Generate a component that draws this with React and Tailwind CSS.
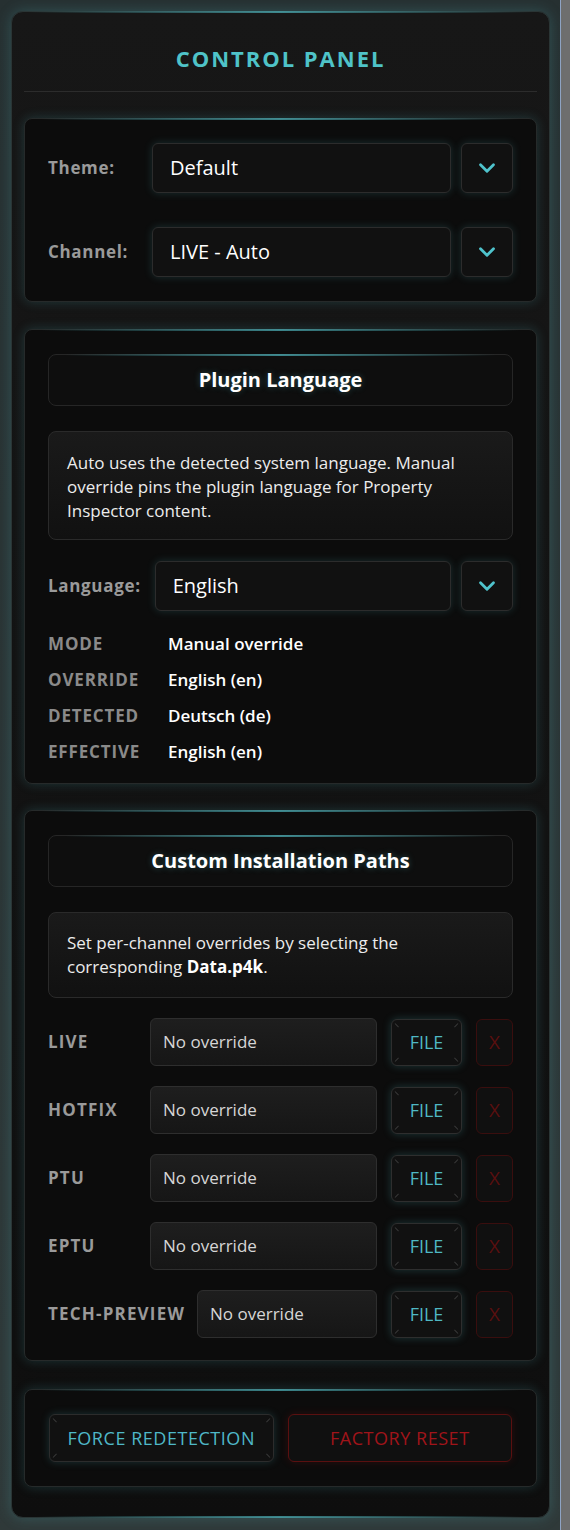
import { ChevronDown } from 'lucide-react'

const font = { fontFamily: '"Open Sans", "Noto Sans", sans-serif' }

const topGlow =
  "before:absolute before:left-4 before:right-4 before:top-[-1px] before:h-[2px] before:rounded-full before:bg-linear-to-r before:from-transparent before:via-[#4fb8c0]/70 before:to-transparent"

function Section({ children, className = '' }) {
  return (
    <div className={`relative rounded-lg border border-[#262a2a] bg-[#0c0c0c] shadow-[0_0_12px_rgba(79,184,192,0.22)] ${topGlow} ${className}`}>
      {children}
    </div>
  )
}

function SelectRow({ label, value }) {
  return (
    <div className="flex items-center">
      <span className="min-w-[90px] mr-[14px] text-[17px] font-bold tracking-[0.04em] text-[#9a9a9a]">{label}</span>
      <div className="flex-1 h-[50px] flex items-center px-[17px] rounded-md border border-[#2c2c2c] bg-[#111111] shadow-[0_0_8px_rgba(79,184,192,0.2)] text-[20px] text-white">
        {value}
      </div>
      <button className="ml-[10px] w-[52px] h-[50px] flex items-center justify-center rounded-md border border-[#2c2c2c] bg-[#111111] shadow-[0_0_8px_rgba(79,184,192,0.2)]">
        <ChevronDown size={26} strokeWidth={2.6} className="text-[#4fc3cc]" />
      </button>
    </div>
  )
}

function Heading({ children }) {
  return (
    <div className={`relative h-[52px] flex items-center justify-center rounded-lg border border-[#262626] bg-[#0e0e0e] text-[20px] font-bold text-white [text-shadow:0_0_6px_rgba(79,184,192,0.35)] ${topGlow}`}>
      {children}
    </div>
  )
}

function Note({ children, className = '' }) {
  return (
    <div className={`rounded-lg border border-[#2a2a2a] bg-linear-to-b from-[#1a1a1a] to-[#111111] px-[18px] text-[17px] leading-[24px] text-[#ececec] ${className}`}>
      {children}
    </div>
  )
}

function Corners() {
  return (
    <>
      <span className="absolute left-[3px] top-[3px] w-[5px] h-px bg-[#3a3a3a] rotate-45 origin-left" />
      <span className="absolute right-[3px] top-[3px] w-[5px] h-px bg-[#3a3a3a] -rotate-45 origin-right" />
      <span className="absolute left-[3px] bottom-[3px] w-[5px] h-px bg-[#3a3a3a] -rotate-45 origin-left" />
      <span className="absolute right-[3px] bottom-[3px] w-[5px] h-px bg-[#3a3a3a] rotate-45 origin-right" />
    </>
  )
}

function PathRow({ label }) {
  return (
    <div className="flex items-center h-[48px]">
      <span className="min-w-[90px] mr-[12px] text-[17px] font-bold tracking-[0.07em] text-[#9a9a9a]">{label}</span>
      <div className="flex-1 h-[48px] flex items-center px-[12px] rounded-md border border-[#2e2e2e] bg-linear-to-b from-[#1e1e1e] to-[#161616] text-[17px] text-[#d6d6d6]">
        No override
      </div>
      <button className="relative ml-[14px] w-[71px] h-[47px] flex items-center justify-center rounded-md border border-[#2e2e2e] bg-[#111111] shadow-[0_0_8px_rgba(79,184,192,0.25)] text-[18px] text-[#4fb8c4]">
        <Corners />
        FILE
      </button>
      <button className="ml-[14px] w-[37px] h-[47px] flex items-center justify-center rounded-md border border-[#3a0e0e] bg-[#101010] text-[19px] text-[#5a0f0f]">
        X
      </button>
    </div>
  )
}

const info = [
  ['MODE', 'Manual override'],
  ['OVERRIDE', 'English (en)'],
  ['DETECTED', 'Deutsch (de)'],
  ['EFFECTIVE', 'English (en)'],
]

export default function App() {
  return (
    <div style={font} className="flex w-[570px] h-[1530px] bg-linear-to-b from-[#263031] to-[#2f3939] overflow-hidden">
      <div className="flex-1 pl-[11px] pr-[10px] pt-[11px] pb-[12px]">
        <div className={`relative h-full rounded-xl border border-[#2a3535] bg-linear-to-b from-[#171717] to-[#0e0e0e] shadow-[0_0_14px_rgba(79,184,192,0.25)] px-[12px] ${topGlow} after:absolute after:left-6 after:right-6 after:bottom-[-1px] after:h-[2px] after:bg-linear-to-r after:from-transparent after:via-[#4fb8c0]/70 after:to-transparent`}>
          <h1 className="pt-[33px] pb-[20px] leading-[26px] text-center text-[22px] font-bold tracking-[0.09em] text-[#4fc3c8]">
            CONTROL PANEL
          </h1>
          <div className="h-px bg-[#2c2c2c]" />

          <Section className="mt-[26px] px-[23px] py-[24px] flex flex-col gap-[34px]">
            <SelectRow label="Theme:" value="Default" />
            <SelectRow label="Channel:" value="LIVE - Auto" />
          </Section>

          <Section className="mt-[27px] px-[23px] pt-[24px] pb-[13px]">
            <Heading>Plugin Language</Heading>
            <Note className="mt-[25px] pt-[19px] pb-[16px]">
              Auto uses the detected system language. Manual override pins the plugin language for Property Inspector content.
            </Note>
            <div className="mt-[21px]">
              <SelectRow label="Language:" value="English" />
            </div>
            <div className="mt-[15px] flex flex-col">
              {info.map(([k, v]) => (
                <div key={k} className="flex items-center h-[36px]">
                  <span className="w-[120px] text-[17px] font-bold tracking-[0.05em] text-[#8a8a8a]">{k}</span>
                  <span className="text-[17px] font-semibold text-white">{v}</span>
                </div>
              ))}
            </div>
          </Section>

          <Section className="mt-[26px] px-[23px] pt-[24px] pb-[22px]">
            <Heading>Custom Installation Paths</Heading>
            <Note className="mt-[25px] pt-[18px] pb-[18px]">
              Set per-channel overrides by selecting the corresponding{' '}
              <b className="font-bold text-white">Data.p4k</b>.
            </Note>
            <div className="mt-[20px] flex flex-col gap-[20px]">
              {['LIVE', 'HOTFIX', 'PTU', 'EPTU', 'TECH-PREVIEW'].map(l => (
                <PathRow key={l} label={l} />
              ))}
            </div>
          </Section>

          <Section className="mt-[28px] px-[24px] py-[24px] flex gap-[14px]">
            <button className="relative flex-1 h-[48px] rounded-md border border-[#2c2c2c] bg-[#111111] shadow-[0_0_8px_rgba(79,184,192,0.22)] text-[18px] tracking-[0.03em] text-[#4fb8c8]">
              <Corners />
              FORCE REDETECTION
            </button>
            <button className="flex-1 h-[48px] rounded-md border border-[#5a1010] bg-[#101010] shadow-[0_0_8px_rgba(160,20,20,0.2)] text-[18px] tracking-[0.03em] text-[#a0141a]">
              FACTORY RESET
            </button>
          </Section>
        </div>
      </div>
      <div className="w-[10px] h-full bg-[#6e6e6e] border-l border-[#8fa3c4]" />
    </div>
  )
}
